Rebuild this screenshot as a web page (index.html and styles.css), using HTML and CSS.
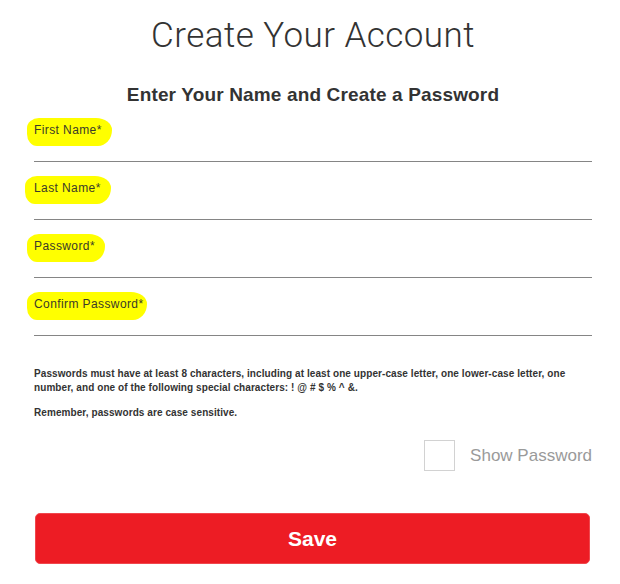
FILE: index.html
```html
<!DOCTYPE html>
<html lang="en">
<head>
<meta charset="utf-8">
<title>Create Your Account</title>
<link rel="stylesheet" href="styles.css">
</head>
<body>
<main class="page">
  <h1 class="title">Create Your Account</h1>
  <h2 class="subtitle">Enter Your Name and Create a Password</h2>
  <form class="form">
    <div class="field"><label class="label hl-1">First Name*</label></div>
    <div class="field"><label class="label hl-2">Last Name*</label></div>
    <div class="field"><label class="label hl-3">Password*</label></div>
    <div class="field"><label class="label hl-4">Confirm Password*</label></div>
    <p class="note first">Passwords must have at least 8 characters, including at least one upper-case letter, one lower-case letter, one number, and one of the following special characters: ! @ # $ % ^ &amp;.</p>
    <p class="note">Remember, passwords are case sensitive.</p>
    <div class="show-row">
      <span class="checkbox"></span>
      <span class="show-label">Show Password</span>
    </div>
    <button type="button" class="save">Save</button>
  </form>
</main>
</body>
</html>
```
FILE: styles.css
```css
html, body {
  margin: 0;
  padding: 0;
  background: #ffffff;
}
body {
  font-family: "Liberation Sans", Arial, sans-serif;
  color: #333333;
}
.page {
  width: 558px;
  padding: 0 28px 0 34px;
}
.title {
  margin: 16px 0 0;
  font-family: Roboto, "Liberation Sans", sans-serif;
  font-weight: 300;
  font-size: 35px;
  line-height: 40px;
  color: #333333;
  text-align: center;
  letter-spacing: 0.45px;
}
.subtitle {
  margin: 31px 0 0;
  font-size: 19px;
  line-height: 16px;
  font-weight: bold;
  color: #333333;
  text-align: center;
  letter-spacing: 0.15px;
}
.form {
  margin-top: 1px;
  display: flex;
  flex-direction: column;
}
.field {
  box-sizing: border-box;
  height: 58px;
  padding-top: 14px;
  border-bottom: 1px solid #858585;
}
.label {
  display: inline-block;
  margin-left: -7px;
  padding: 5px 10px 9px 7px;
  font-size: 12px;
  line-height: 14px;
  letter-spacing: 0.4px;
  color: #3a3a2a;
  background: #ffff00;
  border-radius: 12px 16px 14px 10px / 10px 12px 16px 12px;
}
.hl-2 { margin-left: -9px; padding-left: 9px; }
.hl-4 { padding-right: 3px; }
.note {
  margin: 11px 0 0;
  font-size: 10px;
  line-height: 14px;
  font-weight: bold;
  letter-spacing: 0.08px;
  color: #333333;
}
.note.first {
  margin-top: 31px;
}
.show-row {
  margin-top: 20px;
  display: flex;
  justify-content: flex-end;
  align-items: center;
  gap: 15px;
}
.checkbox {
  box-sizing: border-box;
  width: 31px;
  height: 31px;
  border: 1px solid #d2d2d2;
  background: #ffffff;
}
.show-label {
  font-size: 17px;
  line-height: 20px;
  color: #9a9a9a;
}
.save {
  margin: 42px 2px 0 1px;
  height: 51px;
  border: 1px solid #f0474d;
  border-radius: 5px;
  background: #ed1c24;
  color: #ffffff;
  font-family: "Liberation Sans", Arial, sans-serif;
  font-size: 21px;
  font-weight: bold;
  padding: 0;
  cursor: pointer;
}
```
